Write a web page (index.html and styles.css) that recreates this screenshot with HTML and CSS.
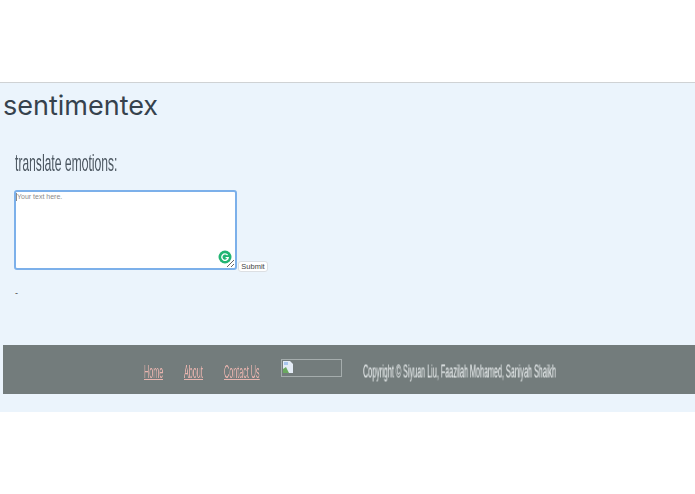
FILE: index.html
```html
<!DOCTYPE html>
<html lang="en">

<head>
    <meta charset="UTF-8">
    <title>sentimentex</title>
    <link rel="stylesheet" href="styles.css">
</head>

<body>
    <div class="page">
        <h1 class="brand">sentimentex</h1>
        <h2 class="heading"><span>translate emotions:</span></h2>
        <form class="entry">
            <div class="box">
                <textarea class="text" placeholder="Your text here."></textarea>
                <i class="caret"></i>
                <svg class="grammarly" width="14" height="14" viewBox="0 0 14 14">
                    <circle cx="7" cy="7" r="6.5" fill="#22b573" />
                    <path d="M9.6 5.2A3.2 3.2 0 1 0 10.2 7.6H7.6" fill="none" stroke="#fff" stroke-width="1.4" />
                </svg>
            </div>
            <button class="send" type="button">Submit</button>
        </form>
        <p class="result">-</p>
        <div class="footer">
            <a class="link link-home" href="#"><span>Home</span></a>
            <a class="link link-about" href="#"><span>About</span></a>
            <a class="link link-contact" href="#"><span>Contact Us</span></a>
            <div class="broken">
                <svg width="10" height="12" viewBox="0 0 10 12">
                    <path d="M0 0H7L10 3V12H0Z" fill="#e4ecf6" />
                    <path d="M0 12V8L3 6L6 12Z" fill="#6aa85f" />
                    <path d="M1 1H5V4H1Z" fill="#a9c6ee" />
                </svg>
            </div>
            <p class="copy"><span>Copyright © Siyuan Liu, Faazilah Mohamed, Saniyah Shaikh</span></p>
        </div>
    </div>
</body>

</html>
```

FILE: styles.css
```css
* {
    padding: 0;
    margin: 0;
    box-sizing: border-box;
}

body {
    background: #fff;
    font-family: "Liberation Sans", Arial, sans-serif;
    padding-top: 82px;
    overflow: hidden;
}

.page {
    height: 330px;
    background: #ebf4fc;
    border-top: 1px solid #cfd2d4;
    padding-top: 4px;
}

.brand {
    font-family: Inter, sans-serif;
    font-weight: 400;
    font-size: 27px;
    line-height: 37px;
    color: #36424d;
    padding-left: 3px;
}

.heading {
    font-weight: 400;
    font-size: 24px;
    line-height: 26px;
    color: #4d5862;
    margin: 26px 0 14px 15px;
    height: 26px;
}

.heading span,
.link span,
.copy span {
    display: inline-block;
    white-space: nowrap;
    transform-origin: left center;
    will-change: transform;
}

.heading span {
    transform: scaleX(.505);
}

.entry {
    display: flex;
    align-items: flex-end;
    padding-left: 14px;
}

.box {
    position: relative;
    width: 223px;
    height: 80px;
}

.text {
    display: block;
    width: 223px;
    height: 80px;
    border: 2px solid #7cb0ea;
    border-radius: 3px;
    outline: 0;
    padding: 1px 1px;
    font-family: "Liberation Sans", Arial, sans-serif;
    font-size: 7px;
    background: #fff;
}

.text::placeholder {
    color: #8a8a8a;
    opacity: 1;
}

.caret {
    position: absolute;
    left: 2px;
    top: 3px;
    width: 1px;
    height: 8px;
    background: #8a8a8a;
}

.grammarly {
    position: absolute;
    right: 5px;
    bottom: 6px;
}

.send {
    width: 30px;
    height: 11px;
    margin-left: 1px;
    margin-bottom: -2px;
    background: #fff;
    border: 1px solid #dcdfe3;
    border-radius: 3px;
    font-family: "Liberation Sans", Arial, sans-serif;
    font-size: 7.5px;
    line-height: 9px;
    color: #444;
}

.result {
    font-size: 9px;
    line-height: 10px;
    color: #444;
    margin: 18px 0 0 15px;
}

.footer {
    display: flex;
    align-items: center;
    height: 49px;
    margin: 47px 0 0 3px;
    padding-left: 141px;
    background: #737c7c;
}

.link {
    display: block;
    flex: none;
    font-size: 18px;
    line-height: 20px;
    color: #e8b4ae;
    margin-top: 4px;
}

.link span {
    text-decoration: underline;
    transform: scaleX(.4);
}

.link-home {
    width: 40px;
}

.link-about {
    width: 40px;
}

.link-contact {
    width: 57px;
}

.broken {
    flex: none;
    width: 61px;
    height: 18px;
    border: 1px solid #a5adad;
    margin-top: -3px;
    padding: 1px;
}

.broken svg {
    display: block;
}

.copy {
    flex: none;
    width: 195px;
    font-size: 8px;
    line-height: 20px;
    color: #f0f4f5;
    margin: 6px 0 0 21px;
}

.copy span {
    transform: scale(.9, 2.25);
}
```
